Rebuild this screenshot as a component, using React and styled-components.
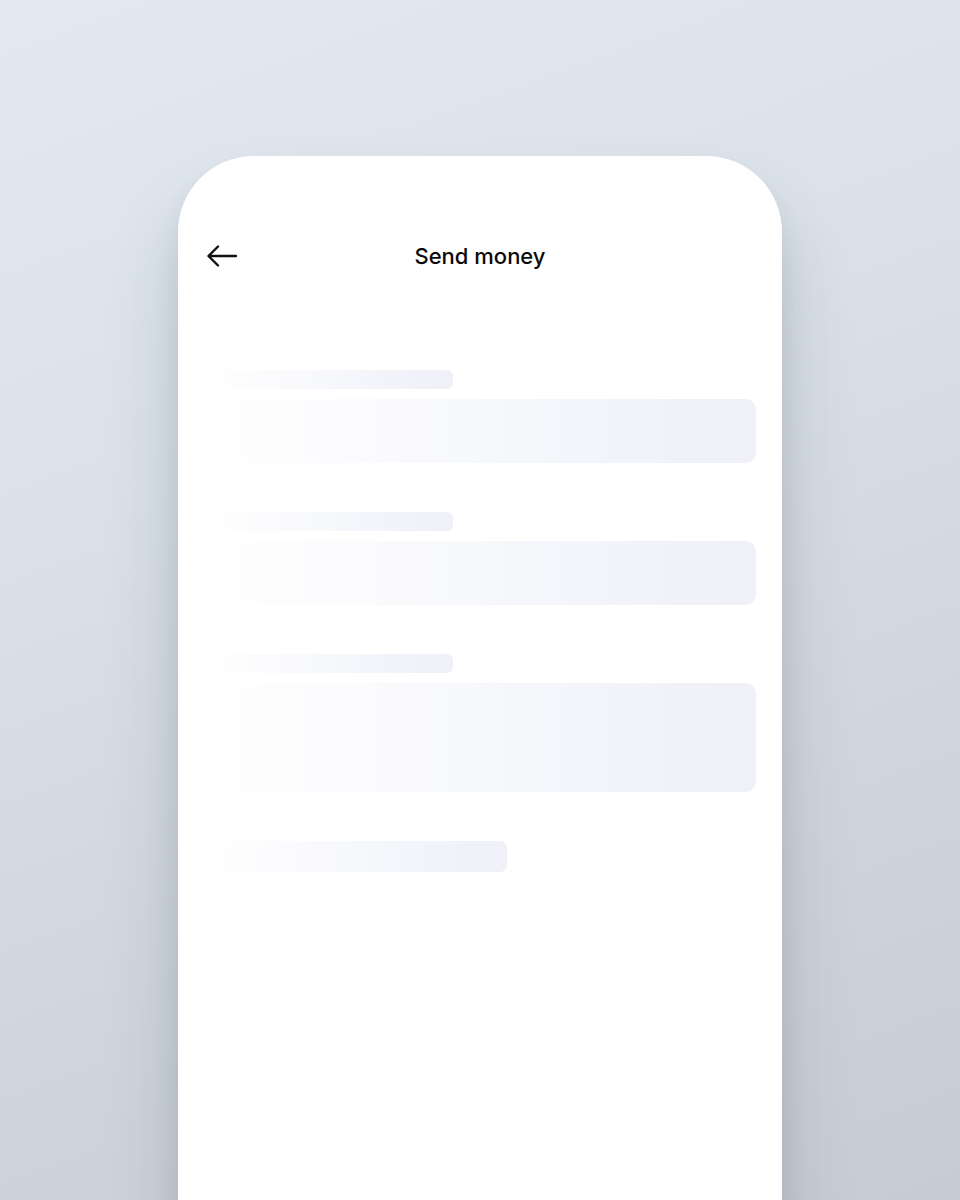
import React from "react";
import styled, { createGlobalStyle } from "styled-components";

const Global = createGlobalStyle`
  html, body { margin: 0; padding: 0; }
  body { font-family: Inter, "Noto Sans", sans-serif; }
`;

const Page = styled.div`
  width: 960px;
  height: 1200px;
  overflow: hidden;
  box-sizing: border-box;
  padding-top: 156px;
  display: flex;
  justify-content: center;
  background: linear-gradient(160deg, #e2e9f2 0%, #dae1e8 35%, #cfd5dd 70%, #c6ccd4 100%);
`;

const Phone = styled.div`
  width: 604px;
  height: 1120px;
  flex-shrink: 0;
  background: #ffffff;
  border-radius: 76px 76px 0 0;
  box-shadow: 0 50px 70px rgba(70, 80, 100, 0.22), 0 20px 24px rgba(70, 80, 100, 0.1);
  box-sizing: border-box;
  padding: 80px 26px 0 26px;
  display: flex;
  flex-direction: column;
`;

const Header = styled.div`
  position: relative;
  height: 40px;
  display: flex;
  align-items: center;
  justify-content: center;
`;

const BackButton = styled.button`
  position: absolute;
  left: 2px;
  top: 50%;
  transform: translateY(-50%);
  border: 0;
  background: none;
  padding: 0;
  width: 32px;
  height: 24px;
  display: flex;
  align-items: center;
  color: #111;
`;

const Title = styled.h1`
  margin: 0;
  font-size: 22px;
  font-weight: 500;
  color: #0a0a0a;
  letter-spacing: 0px;
`;

const Form = styled.div`
  margin-top: 94px;
  display: flex;
  flex-direction: column;
  gap: 49px;
`;

const Field = styled.div`
  display: flex;
  flex-direction: column;
  gap: 10px;
`;

const Skeleton = styled.div`
  width: ${(p) => p.$w};
  height: ${(p) => p.$h}px;
  border-radius: ${(p) => p.$r}px;
  background: linear-gradient(
    90deg,
    rgba(255, 255, 255, 1) 0%,
    #fcfcfe 20%,
    #f8f9fc 45%,
    #f3f4fa 75%,
    #eff0f8 100%
  );
`;

const ArrowIcon = () => (
  <svg width="32" height="24" viewBox="0 0 32 24" fill="none" stroke="currentColor" strokeWidth="2.4" strokeLinecap="round" strokeLinejoin="round">
    <path d="M30 12H3" />
    <path d="M12 2.5L2.5 12L12 21.5" />
  </svg>
);

export default function App() {
  return (
    <>
      <Global />
      <Page>
        <Phone>
          <Header>
            <BackButton aria-label="Back">
              <ArrowIcon />
            </BackButton>
            <Title>Send money</Title>
          </Header>
          <Form>
            <Field>
              <Skeleton $w="249px" $h={19} $r={6} />
              <Skeleton $w="100%" $h={64} $r={11} />
            </Field>
            <Field>
              <Skeleton $w="249px" $h={19} $r={6} />
              <Skeleton $w="100%" $h={64} $r={11} />
            </Field>
            <Field>
              <Skeleton $w="249px" $h={19} $r={6} />
              <Skeleton $w="100%" $h={109} $r={11} />
            </Field>
            <Skeleton $w="303px" $h={31} $r={7} />
          </Form>
        </Phone>
      </Page>
    </>
  );
}
